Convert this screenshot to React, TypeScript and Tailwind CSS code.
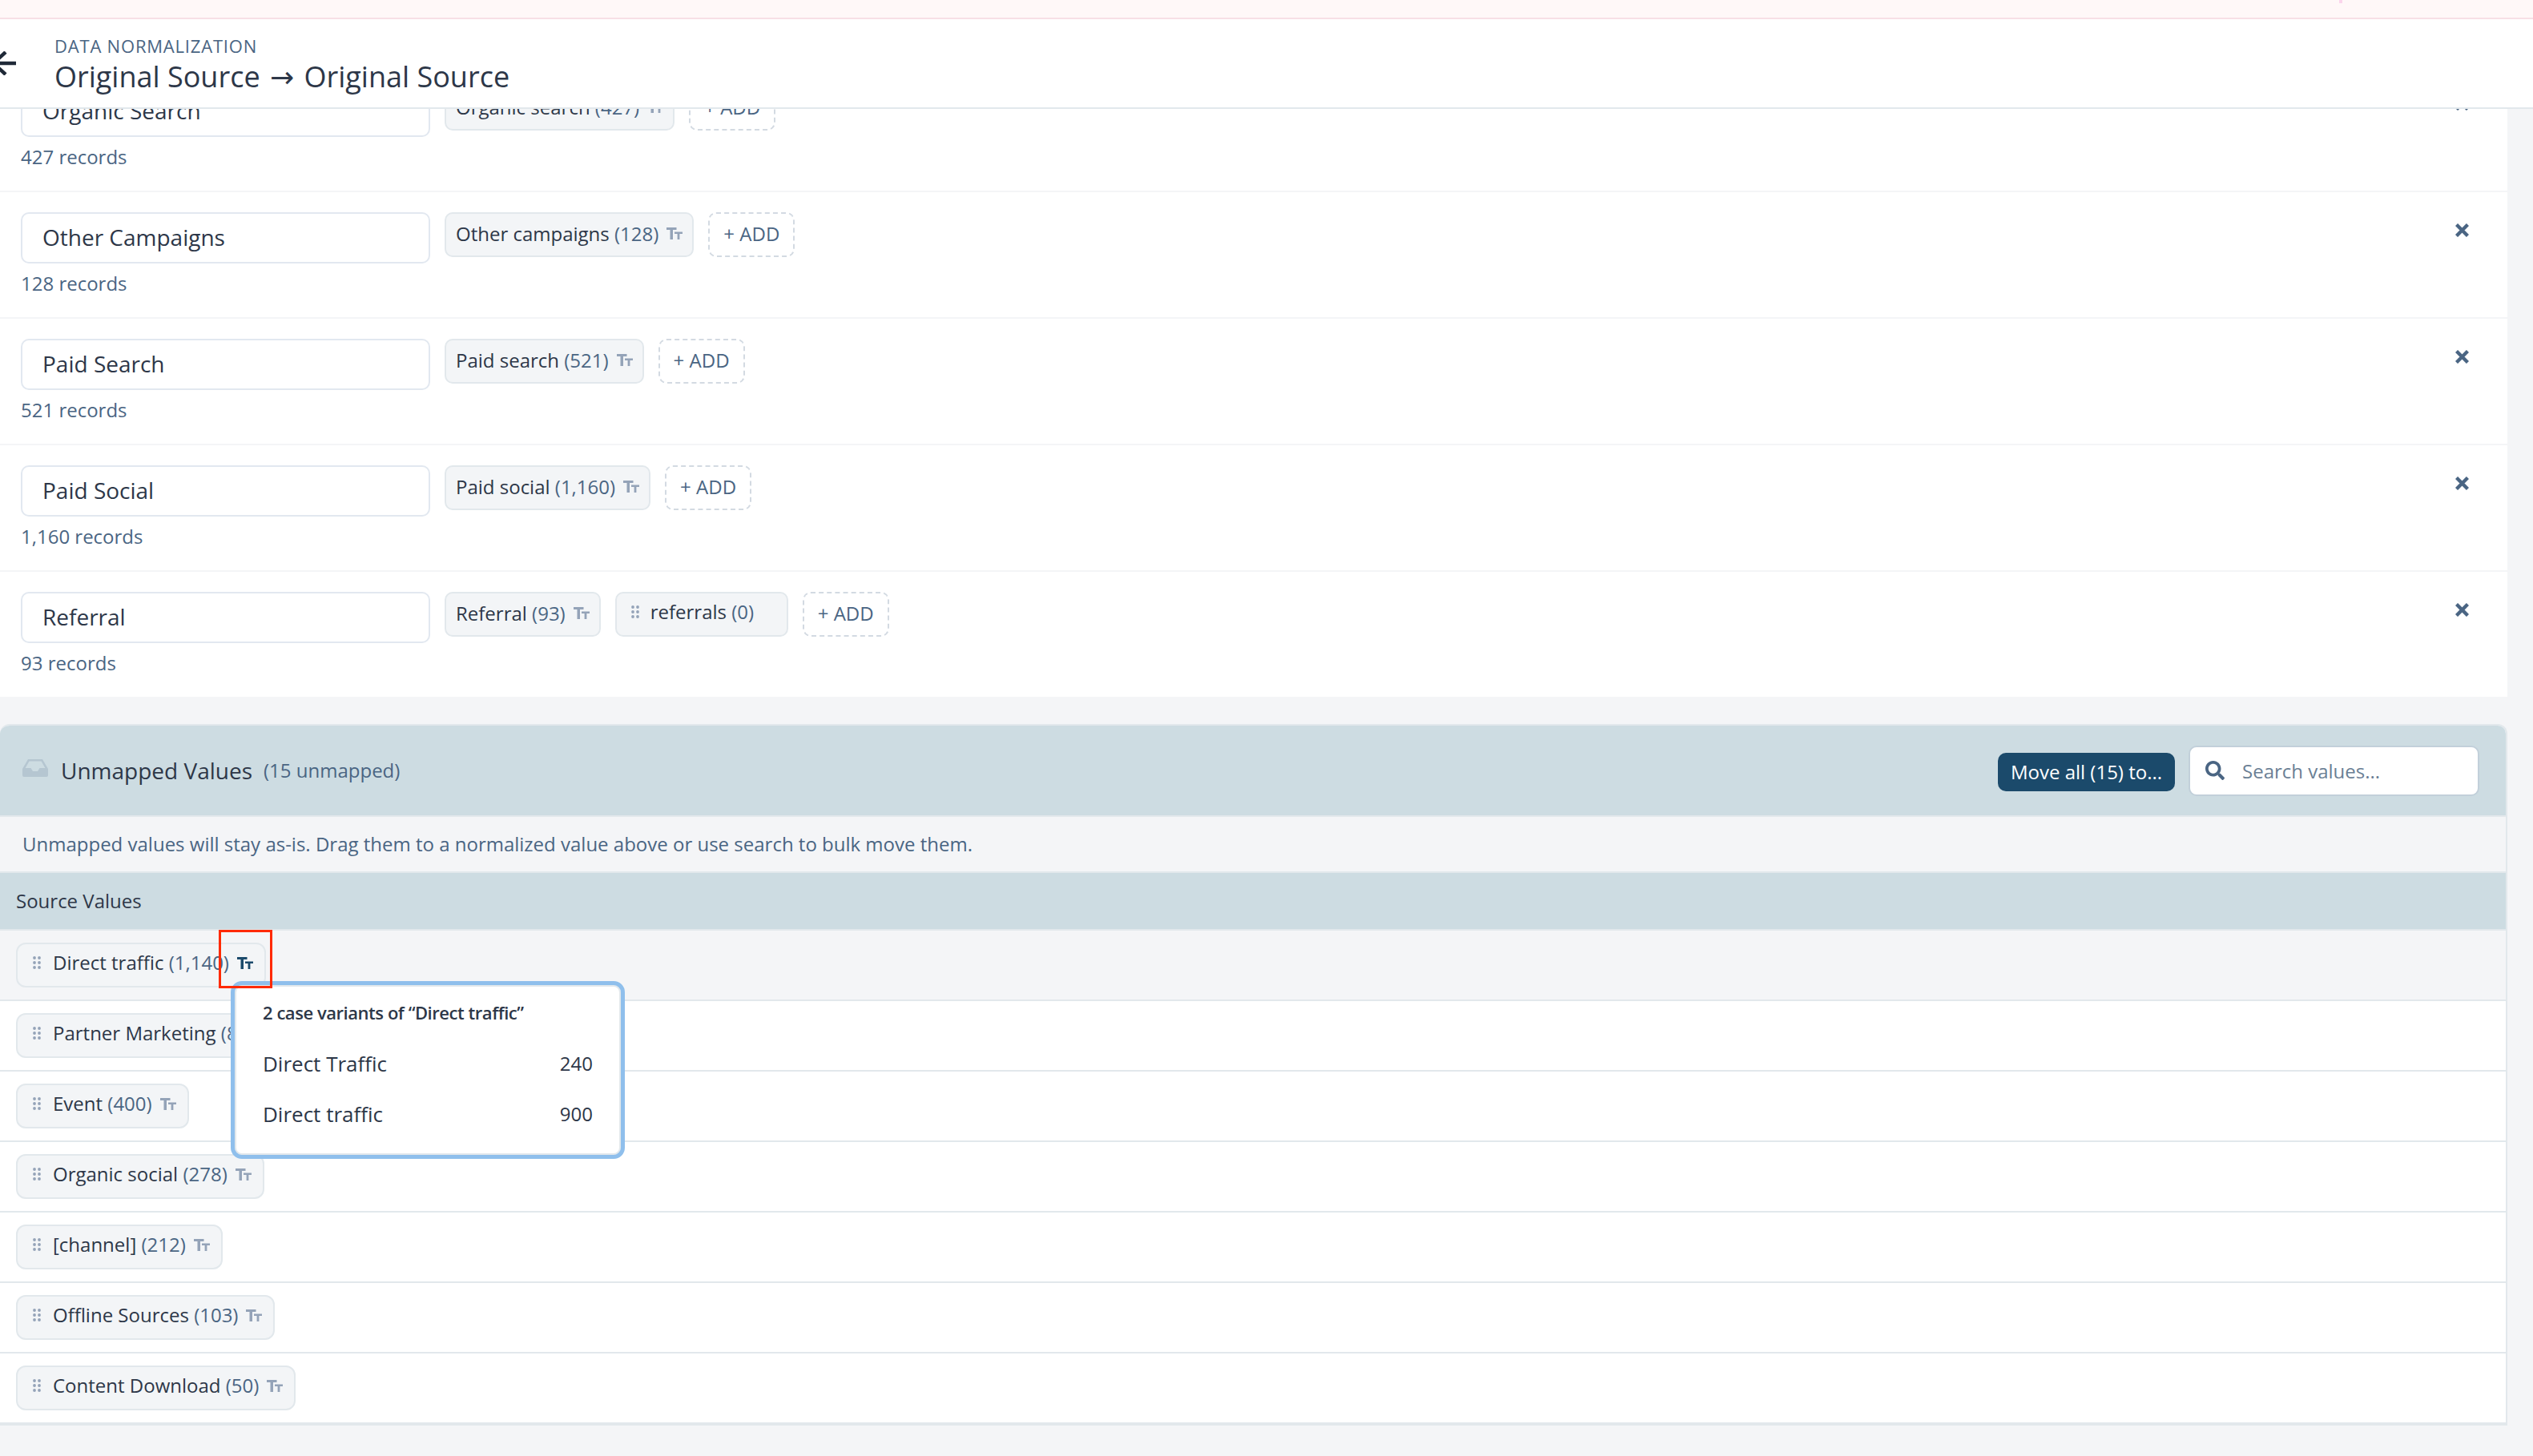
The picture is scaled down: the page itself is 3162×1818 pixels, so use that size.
import { FaSearch } from "react-icons/fa";

const mapped = [
  { name: "Organic Search", records: "427 records", chips: [{ label: "Organic search", count: "(427)" }] },
  { name: "Other Campaigns", records: "128 records", chips: [{ label: "Other campaigns", count: "(128)" }] },
  { name: "Paid Search", records: "521 records", chips: [{ label: "Paid search", count: "(521)" }] },
  { name: "Paid Social", records: "1,160 records", chips: [{ label: "Paid social", count: "(1,160)" }] },
  { name: "Referral", records: "93 records", chips: [{ label: "Referral", count: "(93)" }] },
];

const unmapped = [
  { label: "Direct traffic", count: "(1,140)" },
  { label: "Partner Marketing", count: "(850)" },
  { label: "Event", count: "(400)" },
  { label: "Organic social", count: "(278)" },
  { label: "[channel]", count: "(212)" },
  { label: "Offline Sources", count: "(103)" },
  { label: "Content Download", count: "(50)" },
];

function CaseIcon({ active }: { active?: boolean }) {
  return (
    <svg viewBox="0 0 20 15" className={active ? "w-[20px] h-[15px] shrink-0 fill-[#1b4a6b]" : "w-[20px] h-[15px] shrink-0 fill-[#94a3b8]"}>
      <path d="M0 0h12.5v3H8v12H4.5V3H0z" />
      <path d="M10 5.5h10v2.5h-3.6v7h-2.8V8H10z" />
    </svg>
  );
}

function Grip() {
  return (
    <svg viewBox="0 0 10 16" className="w-[10px] h-[16px] shrink-0 fill-[#94a3b8]">
      <circle cx="2" cy="2" r="1.9" />
      <circle cx="8" cy="2" r="1.9" />
      <circle cx="2" cy="8" r="1.9" />
      <circle cx="8" cy="8" r="1.9" />
      <circle cx="2" cy="14" r="1.9" />
      <circle cx="8" cy="14" r="1.9" />
    </svg>
  );
}

function CloseIcon() {
  return (
    <svg viewBox="0 0 17 17" className="w-[17px] h-[17px] stroke-[#4a6583]" strokeWidth="4.4">
      <path d="M1.5 1.5l14 14M15.5 1.5l-14 14" />
    </svg>
  );
}

function InboxIcon() {
  return (
    <svg viewBox="0 0 32 22" className="w-[32px] h-[22px] -mt-[6px] shrink-0 fill-[#b5c6d1]">
      <path
        fillRule="evenodd"
        d="M7 0h18l7 12v8a2 2 0 0 1-2 2H2a2 2 0 0 1-2-2v-8zM8.5 2.5L3.6 11h6.9l2.5 4h6l2.5-4h6.9L23.5 2.5z"
      />
    </svg>
  );
}

function MappedChip({ label, count }: { label: string; count: string }) {
  return (
    <div className="flex items-center h-[56px] pl-[12px] pr-[12px] pb-[3px] gap-[10px] bg-[#f3f5f7] border-2 border-[#e2e8ec] rounded-[10px] text-[24px]">
      <span className="text-[#2d3748] whitespace-nowrap">
        {label} <span className="text-[#4a6583]">{count}</span>
      </span>
      <CaseIcon />
    </div>
  );
}

function AddButton() {
  return (
    <div className="flex items-center justify-center h-[56px] w-[108px] pb-[2px] border-2 border-dashed border-[#d3dae2] rounded-[10px] text-[24px] text-[#4a6583] whitespace-nowrap">
      + ADD
    </div>
  );
}

export default function App() {
  return (
    <div className="relative flex flex-col h-[1818px] w-[3162px] overflow-hidden bg-[#f4f5f7] font-['Open_Sans',sans-serif]">
      {/* Top strip */}
      <div className="flex justify-end shrink-0 h-[24px] pr-[238px] bg-[#fff8f8] border-b-2 border-[#f8e0e6]">
        <div className="w-[4px] h-[4px] bg-[#fbd5ec]" />
      </div>

      {/* Header */}
      <div className="relative z-10 flex items-center shrink-0 h-[112px] gap-[48px] bg-white border-b-2 border-[#e2e8ec]">
        <svg viewBox="0 0 20 30" className="w-[20px] h-[30px] stroke-[#1f2937] fill-none" strokeWidth="4.5">
          <path d="M-2 15h22M-8 15L7 1M-8 15L7 29" />
        </svg>
        <div className="flex flex-col pt-[4px]">
          <span className="text-[22px] leading-[30px] tracking-[0.8px] text-[#4a6583]">DATA NORMALIZATION</span>
          <span className="text-[36px] leading-[48px] font-medium text-[#2d3748] whitespace-nowrap">
            Original Source <span className="font-['DejaVu_Sans',sans-serif] text-[36px] mx-[3px]">→</span> Original Source
          </span>
        </div>
      </div>

      <div className="flex-1 overflow-hidden">
        {/* Normalized values */}
        <div className="w-[3130px] -mt-[54px] bg-white">
          {mapped.map((row, i) => (
            <div
              key={row.name}
              className={i === mapped.length - 1 ? "flex justify-between h-[156px] pt-[25px] pl-[26px] pr-[48px]" : "flex justify-between h-[158px] pt-[25px] pl-[26px] pr-[48px] border-b-2 border-[#f4f5f7]"}
            >
              <div className="flex flex-col">
                <div className="flex items-start gap-[18px]">
                  <div className="flex items-center w-[511px] h-[64px] pl-[25px] pb-[2px] bg-white border-2 border-[#e2e8f0] rounded-[10px] text-[28px] text-[#2d3748]">
                    {row.name}
                  </div>
                  {row.chips.map((c) => (
                    <MappedChip key={c.label} label={c.label} count={c.count} />
                  ))}
                  {row.name === "Referral" && (
                    <div className="flex items-center w-[216px] h-[56px] pb-[6px] pl-[18px] gap-[14px] bg-[#f3f5f7] border-2 border-[#e2e8ec] rounded-[10px] text-[24px]">
                      <Grip />
                      <span className="text-[#2d3748] whitespace-nowrap">
                        referrals <span className="text-[#4a6583]">(0)</span>
                      </span>
                    </div>
                  )}
                  <AddButton />
                </div>
                <span className="mt-[8px] text-[24px] leading-[34px] text-[#4a6583]">{row.records}</span>
              </div>
              <div className="pt-[14px]">
                <CloseIcon />
              </div>
            </div>
          ))}
        </div>

        {/* Unmapped values */}
        <div className="w-[3130px] mt-[34px] border-2 border-l-0 border-[#e2e8ec] rounded-t-[12px] bg-white overflow-hidden">
          <div className="flex items-center justify-between h-[114px] pl-[28px] pr-[33px] bg-[#cddce2] border-b-2 border-[#e2e8ec]">
            <div className="flex items-center">
              <InboxIcon />
              <span className="ml-[16px] text-[28px] font-medium text-[#2d3748]">Unmapped Values</span>
              <span className="ml-[14px] text-[24px] text-[#4a6583]">(15 unmapped)</span>
            </div>
            <div className="flex items-center gap-[17px]">
              <div className="flex items-center justify-center w-[221px] h-[48px] mt-[4px] bg-[#1b4a6b] rounded-[10px] text-[24px] font-medium text-white whitespace-nowrap">
                Move all (15) to...
              </div>
              <div className="flex items-center w-[363px] h-[63px] pl-[19px] gap-[22px] bg-white border-2 border-[#c2d0da] rounded-[10px] text-[24px] text-[#6b7f95]">
                <FaSearch className="w-[24px] h-[24px] text-[#4a6583]" />
                <span className="pt-[2px]">Search values...</span>
              </div>
            </div>
          </div>

          <div className="flex items-center h-[70px] pl-[28px] bg-[#f4f5f7] border-b-2 border-[#e2e8ec] text-[24px] text-[#4a6583]">
            Unmapped values will stay as-is. Drag them to a normalized value above or use search to bulk move them.
          </div>

          <div className="flex items-center h-[72px] pl-[20px] bg-[#cddce2] border-b-2 border-[#e2e8ec] text-[24px] font-medium text-[#2d3748]">
            Source Values
          </div>

          {unmapped.map((item, i) => (
            <div
              key={item.label}
              className={i === 0 ? "flex items-center h-[88px] pl-[20px] bg-[#f4f5f7] border-b-2 border-[#e2e8ec]" : "flex items-center h-[88px] pl-[20px] bg-white border-b-2 border-[#e2e8ec]"}
            >
              <div className="flex items-center h-[56px] pl-[19px] pr-[14px] pb-[6px] bg-[#f3f5f7] border-2 border-[#e2e8ec] rounded-[12px] text-[24px]">
                <Grip />
                <span className="ml-[15px] text-[#2d3748] whitespace-nowrap">
                  {item.label} <span className="text-[#4a6583]">{item.count}</span>
                </span>
                <span className="ml-[10px]">
                  <CaseIcon active={i === 0} />
                </span>
              </div>
            </div>
          ))}
        </div>
      </div>

      {/* Case variants popover */}
      <div className="absolute left-[288px] top-[1225px] z-20 flex flex-col w-[492px] h-[222px] pt-[19px] pl-[35px] pr-[35px] bg-white border-[5px] border-[#8fbfec] rounded-[14px] shadow-[inset_0_0_0_2px_#e2e8ec]">
        <span className="text-[22px] leading-[30px] font-semibold tracking-[-0.45px] text-[#2d3748]">2 case variants of “Direct traffic”</span>
        <div className="flex items-center justify-between mt-[29px] h-[40px] text-[26px] text-[#2d3748]">
          <span>Direct Traffic</span>
          <span className="text-[24px]">240</span>
        </div>
        <div className="flex items-center justify-between mt-[23px] h-[40px] text-[26px] text-[#2d3748]">
          <span>Direct traffic</span>
          <span className="text-[24px]">900</span>
        </div>
      </div>

      {/* Annotation box from the screenshot */}
      <div className="absolute left-[273px] top-[1161px] z-30 w-[67px] h-[73px] border-[3px] border-[#ff2a00]" />
    </div>
  );
}
